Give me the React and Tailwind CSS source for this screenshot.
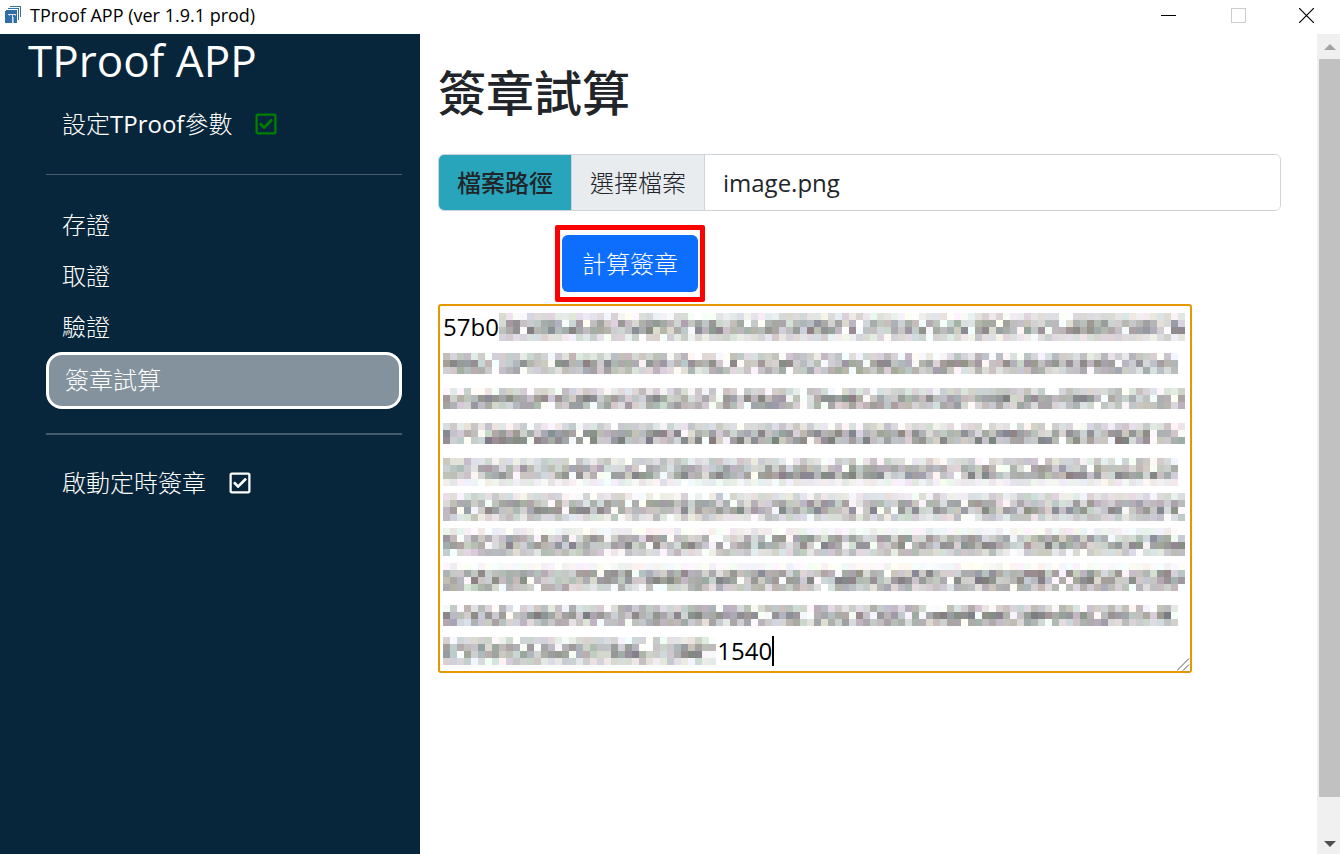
import { useState } from 'react';
import { FaRegCheckSquare } from 'react-icons/fa';

const CELL = 7;

// top: offset inside the textarea, from/to: first and last column, rows: shade per cell row
const MASK_LINES = [
  { top: 7, from: 8, to: 106, rows: [0.12, 0.3, 0.34, 0.14] },
  { top: 47, from: 0, to: 105, rows: [0.2, 0.34, 0.26] },
  { top: 82, from: 0, to: 106, rows: [0.18, 0.34, 0.28] },
  { top: 117, from: 0, to: 106, rows: [0.16, 0.34, 0.36] },
  { top: 152, from: 0, to: 105, rows: [0.17, 0.28, 0.34, 0.07] },
  { top: 187, from: 0, to: 106, rows: [0.14, 0.3, 0.34, 0.18] },
  { top: 222, from: 0, to: 106, rows: [0.06, 0.3, 0.34, 0.2] },
  { top: 257, from: 0, to: 106, rows: [0.03, 0.32, 0.36, 0.24] },
  { top: 299, from: 0, to: 105, rows: [0.22, 0.36, 0.26] },
  { top: 331, from: 0, to: 39, rows: [0.14, 0.3, 0.34, 0.16] },
];

const noise = (n) => {
  const x = Math.sin(n * 127.1 + 11.7) * 43758.5453;
  return x - Math.floor(x);
};

const buildMask = () => {
  const cells = [];

  MASK_LINES.forEach((line, l) => {
    line.rows.forEach((shade, r) => {
      for (let c = line.from; c < line.to; c++) {
        const seed = l * 1000 + r * 200 + c;
        const dark = shade * (0.45 + noise(seed) * 0.95);
        const empty = noise(seed + 5000) < (r === 0 ? 0.22 : 0.08);
        const base = 255 * (1 - (empty ? 0.02 : dark));
        const tint = (k) => Math.min(255, Math.round(base + (noise(seed + k) - 0.5) * 18));

        cells.push({
          key: `${l}-${r}-${c}`,
          x: c * CELL,
          y: line.top + r * CELL,
          fill: `rgb(${tint(7000)}, ${tint(8000)}, ${tint(9000)})`,
        });
      }
    });
  });

  return cells;
};

const MASK_CELLS = buildMask();

const NAV_ITEMS = ['存證', '取證', '驗證'];

const HASH_TEXT = '57b0' + '\n'.repeat(9) + '\u00a0'.repeat(44) + '1540';

const AppLogo = () => (
  <svg width="17" height="18" viewBox="0 0 17 18" shapeRendering="crispEdges" aria-hidden="true">
    <path d="M5 0.5H16M15.5 0V11M3 2.5H14M13.5 2V14M1 4.5H12" fill="none" stroke="#3572a5" />
    <rect x="0" y="5" width="12" height="12" fill="#2f6ea5" />
    <path d="M3 8.5H11M7.5 8V18" fill="none" stroke="#d5e4f0" />
    <path d="M4.5 9V10M10.5 9V10M8.5 11V17" fill="none" stroke="#8fb4d2" />
  </svg>
);

const TitleBar = () => (
  <header className="flex h-[34px] shrink-0 items-center justify-between bg-white text-black">
    <div className="flex items-center gap-2 pb-1 pl-[5px]">
      <AppLogo />
      <span className="text-[18px] leading-6">TProof APP (ver 1.9.1 prod)</span>
    </div>

    <div className="flex pb-1">
      <button type="button" aria-label="Minimize" className="grid w-[70px] place-items-center">
        <svg width="15" height="15" aria-hidden="true">
          <path d="M0 7.5H15" stroke="#000" />
        </svg>
      </button>
      <button type="button" aria-label="Maximize" disabled className="grid w-[70px] place-items-center">
        <svg width="15" height="15" aria-hidden="true">
          <rect x="0.5" y="0.5" width="14" height="14" fill="none" stroke="#ccc" />
        </svg>
      </button>
      <button type="button" aria-label="Close" className="grid w-[67px] place-items-center">
        <svg width="15" height="15" aria-hidden="true">
          <path d="M0 0L15 15M15 0L0 15" stroke="#000" strokeWidth="1.2" />
        </svg>
      </button>
    </div>
  </header>
);

const Sidebar = () => {
  const [timed, setTimed] = useState(true);

  return (
    <aside className="w-[420px] shrink-0 bg-[#07263b] text-white">
      <h1 className="pl-7 text-[44px] leading-[52px]">TProof APP</h1>

      <nav className="pr-[18px] pl-[46px] text-2xl leading-9">
        <a href="#settings" className="mt-5 flex items-center gap-[22px] px-4">
          <span>
            <span className="font-light">設定</span>TProof<span className="font-light">參數</span>
          </span>
          <FaRegCheckSquare className="text-[#008000]" />
        </a>

        <hr className="mt-8 border-[#455b6b]" />

        <ul className="mt-8 font-light">
          {NAV_ITEMS.map((item) => (
            <li key={item} className="mb-[15px]">
              <a href={`#${item}`} className="block px-4">
                {item}
              </a>
            </li>
          ))}
        </ul>

        <a
          href="#簽章試算"
          aria-current="page"
          className="-mt-2 block rounded-2xl border-3 border-white bg-[#83929d] px-4 pt-[7px] pb-2 font-light"
        >
          簽章試算
        </a>

        <hr className="mt-6 border-t-2 border-[#455b6b]" />

        <label className="mt-[30px] flex items-center gap-[22px] px-4 font-light">
          啟動定時簽章
          <span className="grid place-items-center">
            <input
              type="checkbox"
              checked={timed}
              onChange={(e) => setTimed(e.target.checked)}
              className="col-start-1 row-start-1 size-[21px] appearance-none"
            />
            <FaRegCheckSquare className="pointer-events-none col-start-1 row-start-1" />
          </span>
        </label>
      </nav>
    </aside>
  );
};

const Scrollbar = () => (
  <div className="flex w-[23px] shrink-0 flex-col bg-[#f0f0f0] pl-[2px]">
    <button type="button" aria-label="Scroll up" className="grid h-[25px] place-items-center">
      <svg width="12" height="6" aria-hidden="true">
        <path d="M0 6L6 0L12 6Z" fill="#a3a3a3" />
      </svg>
    </button>
    <div className="grow-[738] basis-0 bg-[#c1c1c1]" />
    <div className="grow-[36] basis-0" />
    <button type="button" aria-label="Scroll down" className="grid h-[21px] place-items-center">
      <svg width="12" height="6" aria-hidden="true">
        <path d="M0 0L6 6L12 0Z" fill="#505050" />
      </svg>
    </button>
  </div>
);

const HashBox = () => {
  const [hash, setHash] = useState(HASH_TEXT);

  return (
    <div className="relative w-[754px] max-w-full">
      <textarea
        aria-label="簽章"
        rows={10}
        value={hash}
        onChange={(e) => setHash(e.target.value)}
        className="block w-full rounded-[3px] border-2 border-[#e59700] bg-white px-[3px] pt-[3px] pb-[2px] text-2xl leading-9 text-black outline-none"
      />

      {/* masked part of the hash */}
      <svg
        width="742"
        height="364"
        shapeRendering="crispEdges"
        aria-hidden="true"
        className="pointer-events-none absolute top-[2px] left-[5px]"
      >
        {MASK_CELLS.map((cell) => (
          <rect key={cell.key} x={cell.x} y={cell.y} width={CELL} height={CELL} fill={cell.fill} />
        ))}
      </svg>

      {/* text caret */}
      <span className="absolute bottom-[7px] left-[334px] h-[30px] w-[2px] bg-black" />

      {/* resize grip */}
      <svg
        width="13"
        height="13"
        aria-hidden="true"
        className="pointer-events-none absolute right-[2px] bottom-[2px] bg-white"
      >
        <path d="M0 12.5L12 0.5M6 12.5L12 6.5" stroke="#555" />
      </svg>
    </div>
  );
};

const App = () => {
  return (
    <div className="flex h-screen flex-col bg-white font-['Open_Sans','Noto_Sans_CJK_TC',sans-serif]">
      <TitleBar />

      <div className="flex min-h-0 grow">
        <Sidebar />

        <main className="min-w-0 grow pt-[30px] pr-9 pl-[18px] text-2xl leading-9 text-[#212529]">
          <h2 className="text-5xl leading-[58px] font-medium">簽章試算</h2>

          {/* FILE PICKER */}
          <div className="mt-8 flex h-[57px] overflow-hidden rounded-md border border-[#ced4da]">
            <label
              htmlFor="file-name"
              className="flex items-center border-r border-[#ced4da] bg-[#28a4bb] px-[18px] font-medium"
            >
              檔案路徑
            </label>
            <button
              type="button"
              className="border-r border-[#ced4da] bg-[#e9ecef] px-[18px] font-light"
            >
              選擇檔案
            </button>
            <input
              id="file-name"
              type="text"
              readOnly
              value="image.png"
              className="min-w-0 grow bg-white px-[18px] outline-none"
            />
          </div>

          {/* CALCULATE */}
          <div className="mt-[14px] mb-[2px] ml-[117px] w-fit rounded-[2px] border-5 border-[#ff0000] px-[2px] py-[5px]">
            <button
              type="button"
              className="block h-[57px] rounded-md bg-[#0d6efd] px-5 font-light text-white"
            >
              計算簽章
            </button>
          </div>

          <HashBox />
        </main>

        <Scrollbar />
      </div>
    </div>
  );
};

export default App;
